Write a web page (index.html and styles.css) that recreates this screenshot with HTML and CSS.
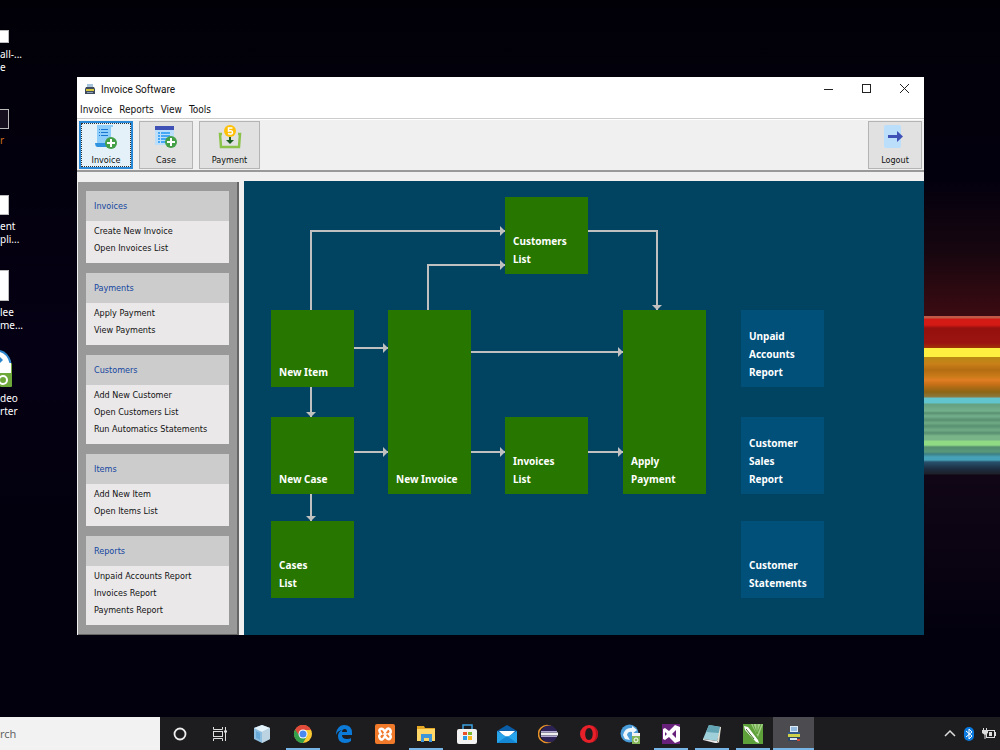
FILE: index.html
```html
<!DOCTYPE html>
<html lang="en">
<head>
  <meta charset="UTF-8">
  <meta name="viewport" content="width=device-width, initial-scale=1.0">
  <title>Invoice Software</title>
  <link rel="stylesheet" href="styles.css">
</head>
<body>
<div class="desktop">
  <ul class="shortcuts">
    <li>
      <div class="art"><span class="thumb thumb-s"></span></div>
      <span>all-...</span><span>e</span>
    </li>
    <li>
      <div class="art"><span class="thumb thumb-dark"></span></div>
      <span class="orange">r</span>
    </li>
    <li>
      <div class="art"><span class="thumb"></span></div>
      <span>ent</span><span>pli...</span>
    </li>
    <li>
      <div class="art"><span class="thumb thumb-l"></span></div>
      <span>lee</span><span>me...</span>
    </li>
    <li>
      <div class="art">
        <svg width="12" height="38" viewBox="0 0 12 38">
          <path d="M0 2Q9 4 11 14H0z" fill="#fff"/>
          <path d="M0 2Q8 4 10.500 14" fill="none" stroke="#2d86cc" stroke-width="2"/>
          <path d="M0 8l3 3-3 3z" fill="#2d86cc"/>
          <rect y="14" width="12" height="24" rx="1" fill="#6fa83a"/>
          <rect y="14" width="11" height="10" fill="#fff"/>
          <circle cx="3" cy="31" r="4" fill="none" stroke="#fff" stroke-width="2"/>
        </svg>
      </div>
      <span>deo</span><span>rter</span>
    </li>
  </ul>

  <div class="window">
    <header class="titlebar">
      <svg class="app-icon" width="12" height="12" viewBox="0 0 12 12">
        <rect x="3" y="1" width="6" height="4" fill="#a8c4da"/>
        <path d="M2 4h8l1 2v5H1V6z" fill="#3f4a5c"/>
        <rect x="2" y="6" width="8" height="2" fill="#d8c840"/>
        <rect x="3" y="9" width="6" height="1" fill="#8aa0b8"/>
      </svg>
      <h1>Invoice Software</h1>
      <div class="window-buttons">
        <button aria-label="Minimize"><svg width="10" height="10"><path d="M1 5.500h9" stroke="#222"/></svg></button>
        <button aria-label="Maximize"><svg width="10" height="10"><rect x="1.500" y="0.500" width="8" height="8" fill="none" stroke="#222"/></svg></button>
        <button aria-label="Close"><svg width="10" height="10"><path d="M1 0l9 9M10 0L1 9" stroke="#222"/></svg></button>
      </div>
    </header>

    <nav class="menubar">
      <a href="#">Invoice</a>
      <a href="#">Reports</a>
      <a href="#">View</a>
      <a href="#">Tools</a>
    </nav>

    <div class="toolbar">
      <button class="tool selected">
        <svg width="24" height="24" viewBox="0 0 24 24">
          <path d="M3 0h16v2h-2v16H3z" fill="#8fcdfa"/>
          <path d="M1 18h13v4H3q-2-1-2-4z" fill="#2f93e0"/>
          <path d="M5 4.500h1M7 4.500h7M5 7.500h1M7 7.500h7M5 10.500h1M7 10.500h7" stroke="#1976d2"/>
          <circle cx="17" cy="18" r="6" fill="#43a047"/>
          <path d="M17 14v8M13 18h8" stroke="#fff" stroke-width="2"/>
        </svg>
        Invoice
      </button>
      <button class="tool">
        <svg width="24" height="24" viewBox="0 0 24 24">
          <rect x="1" y="1" width="19" height="19" fill="#bbdefb"/>
          <rect x="1" y="1" width="19" height="4" fill="#3f51b5"/>
          <path d="M4 8h2M7 8h9M4 11h2M7 11h9M4 14h2M7 14h7M4 17h2M7 17h5" stroke="#2196f3" stroke-width="1.500"/>
          <circle cx="17" cy="17" r="6" fill="#43a047"/>
          <path d="M17 13v8M13 17h8" stroke="#fff" stroke-width="2"/>
        </svg>
        Case
      </button>
      <button class="tool tool-wide">
        <svg width="24" height="24" viewBox="0 0 24 24">
          <path d="M4 9H2l1 13h18L22 9h-2" fill="none" stroke="#8bc34a" stroke-width="2.500"/>
          <circle cx="12" cy="6" r="6" fill="#ffc107"/>
          <path d="M14.500 3h-4v3q4-1 4 1.500t-4.500 1" fill="none" stroke="#fff" stroke-width="1.500"/>
          <path d="M12 12v3" stroke="#1b5e20" stroke-width="2"/>
          <path d="M8 15h8l-4 4z" fill="#1b5e20"/>
        </svg>
        Payment
      </button>
      <button class="tool tool-end">
        <svg width="24" height="24" viewBox="0 0 24 24">
          <rect x="1" y="0" width="17" height="23" rx="2" fill="#bbdefb"/>
          <path d="M5 10h9V6l6 5.500-6 5.500v-4H5z" fill="#3f51b5"/>
        </svg>
        Logout
      </button>
    </div>

    <div class="content">
      <aside class="sidebar">
        <section class="panel">
          <h2>Invoices</h2>
          <ul>
            <li><a href="#">Create New Invoice</a></li>
            <li><a href="#">Open Invoices List</a></li>
          </ul>
        </section>
        <section class="panel">
          <h2>Payments</h2>
          <ul>
            <li><a href="#">Apply Payment</a></li>
            <li><a href="#">View Payments</a></li>
          </ul>
        </section>
        <section class="panel">
          <h2>Customers</h2>
          <ul>
            <li><a href="#">Add New Customer</a></li>
            <li><a href="#">Open Customers List</a></li>
            <li><a href="#">Run Automatics Statements</a></li>
          </ul>
        </section>
        <section class="panel">
          <h2>Items</h2>
          <ul>
            <li><a href="#">Add New Item</a></li>
            <li><a href="#">Open Items List</a></li>
          </ul>
        </section>
        <section class="panel">
          <h2>Reports</h2>
          <ul>
            <li><a href="#">Unpaid Accounts Report</a></li>
            <li><a href="#">Invoices Report</a></li>
            <li><a href="#">Payments Report</a></li>
          </ul>
        </section>
      </aside>

      <main class="diagram">
        <svg class="wires" width="680" height="454">
          <defs>
            <marker id="tip" markerWidth="5" markerHeight="10" refX="5" refY="5" orient="auto" markerUnits="userSpaceOnUse">
              <path d="M0 0l5 5-5 5z" fill="#c0c0c0"/>
            </marker>
          </defs>
          <path d="M67 129V50H261"/>
          <path d="M184 129V84H261"/>
          <path d="M344 50H413V129"/>
          <path d="M110 167H144"/>
          <path d="M227 171H379"/>
          <path d="M67 206V236"/>
          <path d="M110 271H144"/>
          <path d="M227 271H261"/>
          <path d="M344 271H379"/>
          <path d="M67 313V340"/>
        </svg>
        <a href="#" class="node customers">Customers<br>List</a>
        <a href="#" class="node new-item">New Item</a>
        <a href="#" class="node new-case">New Case</a>
        <a href="#" class="node cases">Cases<br>List</a>
        <a href="#" class="node tall new-invoice">New Invoice</a>
        <a href="#" class="node invoices">Invoices<br>List</a>
        <a href="#" class="node tall apply">Apply<br>Payment</a>
        <a href="#" class="node report unpaid">Unpaid<br>Accounts<br>Report</a>
        <a href="#" class="node report sales">Customer<br>Sales<br>Report</a>
        <a href="#" class="node report statements">Customer<br>Statements</a>
      </main>
    </div>
  </div>
</div>

<footer class="taskbar">
  <input class="search" type="text" placeholder="rch" aria-label="Search">
  <div class="apps">
    <button aria-label="Cortana">
      <svg width="20" height="20" viewBox="0 0 20 20"><circle cx="10" cy="10" r="5.500" fill="none" stroke="#eee" stroke-width="1.800"/></svg>
    </button>
    <button aria-label="Task View">
      <svg width="20" height="20" viewBox="0 0 20 20" fill="none" stroke="#ddd"><path d="M2.500 3v2.500h9V3M2.500 17v-2.500h9V17M14.500 3v14"/><rect x="2.500" y="7.500" width="9" height="5"/><path d="M13 7.500h3" stroke-width="2"/></svg>
    </button>
    <button aria-label="Virtual Box">
      <svg width="20" height="20" viewBox="0 0 20 20"><path d="M10 1l8 3v11l-8 4-8-4V4z" fill="#8fbfe0"/><path d="M10 1l8 3-8 4-8-4z" fill="#e4f2fa"/><path d="M10 8l8-4v11l-8 4z" fill="#bcd4e2"/><path d="M4 7l4 2v7l-4-2z" fill="#69a9d8"/></svg>
    </button>
    <button class="open" aria-label="Chrome">
      <svg width="20" height="20" viewBox="0 0 20 20"><circle cx="10" cy="10" r="9" fill="#fbc934"/><path d="M10 10L2.200 5.500A9 9 0 0 0 10 19l4-7z" fill="#34a04c"/><path d="M10 10H5L2.200 5.500A9 9 0 0 1 18 6h-8z" fill="#e04a3a"/><circle cx="10" cy="10" r="4.500" fill="#fff"/><circle cx="10" cy="10" r="3.500" fill="#4a8af0"/></svg>
    </button>
    <button aria-label="Edge">
      <svg width="20" height="20" viewBox="0 0 20 20"><path d="M2 9Q4 1 10 1q8 0 8 8v2H8q0 4 5 4 3 0 4-1v3q-2 2-6 2-7 0-7-7 0-4 4-6-5 1-6 5zM8 8h5q0-3-2-3-3 0-3 3z" fill="#0c7ad8"/></svg>
    </button>
    <button aria-label="XAMPP">
      <svg width="20" height="20" viewBox="0 0 20 20"><rect width="20" height="20" rx="2" fill="#f0792a"/><path d="M10 8Q8 4 5.500 5T6 10q-3 1.500-1 4.500T10 12q3 4.500 5 2.500T14 10q3-1.500 1-4.500T10 8z" fill="none" stroke="#fff" stroke-width="2.500"/><path d="M8 10h4" stroke="#fff" stroke-width="1.500"/></svg>
    </button>
    <button class="open" aria-label="File Explorer">
      <svg width="20" height="20" viewBox="0 0 20 20"><path d="M1 2h7l1 2h10v13H1z" fill="#e5a824"/><path d="M1 5h18v12H1z" fill="#ffd768"/><path d="M5 18v-8h11v8h-3v-4H8v4z" fill="#3d94d8"/></svg>
    </button>
    <button aria-label="Store">
      <svg width="20" height="20" viewBox="0 0 20 20"><path d="M6 6V1h9v5" fill="none" stroke="#3aa0e0" stroke-width="1.500"/><rect y="5" width="20" height="15" rx="2" fill="#f2f2f2"/><path d="M6 8h4v3H6z" fill="#e8512a"/><path d="M11 8h4v3h-4z" fill="#7cb82f"/><path d="M6 12h4v4H6z" fill="#2b9be8"/><path d="M11 12h4v4h-4z" fill="#fbb81c"/></svg>
    </button>
    <button aria-label="Mail">
      <svg width="20" height="20" viewBox="0 0 20 20"><path d="M0 7l10-6 10 6v4H0z" fill="#0a5ea8"/><path d="M2 7h16l-8 8z" fill="#fff"/><path d="M0 7l10 6 10-6v12H0z" fill="#28a4ea"/><path d="M0 19l10-7 10 7z" fill="#1488d4"/></svg>
    </button>
    <button aria-label="Eclipse">
      <svg width="20" height="20" viewBox="0 0 20 20"><circle cx="9" cy="10" r="8.500" fill="none" stroke="#e8922a" stroke-width="1.500"/><circle cx="11" cy="10" r="8.500" fill="#2c2255"/><path d="M3 7.500h16M3 12.500h16" stroke="#b0a8d0"/><path d="M3 10h17" stroke="#eee" stroke-width="3"/></svg>
    </button>
    <button aria-label="Opera">
      <svg width="20" height="20" viewBox="0 0 20 20"><path fill-rule="evenodd" d="M10 1a9 9 0 0 1 0 18 9 9 0 0 1 0-18zm0 3c-5 0-5 12 0 12s5-12 0-12z" fill="#e8202a"/><path d="M13 1.500A9 9 0 0 1 13 18.500q4-3 4-8.500t-4-8.500z" fill="#b81420"/></svg>
    </button>
    <button aria-label="Video Converter">
      <svg width="20" height="20" viewBox="0 0 20 20"><circle cx="9.500" cy="9.500" r="9" fill="#4a9cd8"/><path d="M3 11q2-8 9-7V2l5 4-5 4V8q-4-1-5 3l3 5-5-1z" fill="#eef6fb"/><path d="M12 9h8v4h-8z" fill="#f2f2f2"/><path d="M12 12h8v8h-8z" fill="#85b65a"/><circle cx="16" cy="16" r="2" fill="none" stroke="#fff"/></svg>
    </button>
    <button class="open" aria-label="Visual Studio">
      <svg width="20" height="20" viewBox="0 0 20 20"><rect x="1" y="0" width="18" height="20" fill="#68217a"/><path fill-rule="evenodd" d="M14 1l5 2v14l-5 2-6-6-4 3-2-1V5l2-1 4 3zM15 6l-4 4 4 4zM4 8v4l2-2z" fill="#fff"/></svg>
    </button>
    <button class="open" aria-label="Notepad">
      <svg width="20" height="20" viewBox="0 0 20 20"><path d="M7 1l12 2-4 14-14-2z" fill="#9fd0da"/><path d="M7 1l12 2-2 6-13-1z" fill="#62a4b4"/><path d="M1 15l14 2 1 2-3 0-12-3z" fill="#e8e8e8"/><path d="M18 3l1 0-2 16-2-2z" fill="#e4e0d0"/></svg>
    </button>
    <button class="open" aria-label="CorelDRAW">
      <svg width="20" height="20" viewBox="0 0 20 20"><rect width="20" height="20" fill="#5ea03a"/><path d="M8 0h12l-5 13z" fill="#a4d088"/><path d="M10 0l4 10M14 0v10M18 0l-4 10" stroke="#5ea03a" stroke-width="1"/><path d="M1 2l4 1 10 13 1 3-3-1L2 6z" fill="#fff"/><path d="M3 5l8 10" stroke="#386a20"/></svg>
    </button>
    <button class="open active" aria-label="Invoice Software">
      <svg width="20" height="20" viewBox="0 0 20 20"><path d="M6 2h8v6H6z" fill="#dceaf6"/><path d="M7 4h6M7 6h6" stroke="#4a88c8"/><path d="M4 8h12v3H4z" fill="#34588a"/><path d="M4 10h12v3H4z" fill="#cfd04a"/><path d="M4 13h12v4H4z" fill="#2e4664"/><path d="M6 14h7v2H6z" fill="#d8e4ee"/><path d="M13 15h3v2h-3z" fill="#d04a3a"/></svg>
    </button>
  </div>
  <div class="tray">
    <svg width="12" height="14" viewBox="0 0 12 14"><path d="M1 9l5-5 5 5" fill="none" stroke="#ddd" stroke-width="1.500"/></svg>
    <svg width="10" height="14" viewBox="0 0 10 14"><rect width="10" height="14" rx="5" fill="#0a7ae0"/><path d="M2 4l6 5-3 3V2l3 3-6 5" fill="none" stroke="#fff"/></svg>
    <svg width="14" height="14" viewBox="0 0 14 14" fill="none" stroke="#ddd"><rect x="4.500" y="3.500" width="8" height="7"/><path d="M13.500 5v4M1.500 1v3M4.500 1v3M3 7v5"/><path d="M0 3h6v3L3 8 0 6z" fill="#ddd" stroke="none"/><path d="M7 5h3v4H7z" fill="#ddd" stroke="none"/></svg>
  </div>
</footer>
</body>
</html>
```
FILE: styles.css
```css
* {
  box-sizing: border-box;
}
body {
  margin: 0;
  min-height: 100vh;
  display: flex;
  flex-direction: column;
  background: #02000b;
  font-family: "Noto Sans", sans-serif;
  font-size: 10px;
}
ul {
  list-style: none;
  margin: 0;
  padding: 0;
}
a {
  color: inherit;
  text-decoration: none;
}
button {
  font: inherit;
  color: inherit;
  border: none;
  background: none;
  padding: 0;
}

/* Desktop */
.desktop {
  position: relative;
  flex: 1;
  min-height: 640px;
  background:
    linear-gradient(
      transparent 180px, #16060f 250px, #3c0b12 316px,
      #c05a48 316px 318px, #d41a14 319px 325px, #94100e 328px, #9c1410 343px, #a03408 348px,
      #fdf040 348px 357px, #b88a14 357px, #c88018 364px, #b46c12 370px, #c87a18 376px,
      #e07e24 380px, #c87018 384px, #8c6414 392px, #8a7a40 397px,
      #62c4cc 398px 403px, #64a080 404px, #74b08c 411px, #588f70 413px, #74b08c 416px,
      #588f70 420px, #70ac86 423px, #588f70 426px, #70ac86 430px, #588f70 433px, #78b488 436px,
      #78b488 440px, #90dc84 441px 445px, #549070 447px, #58987a 452px, #3c7e84 454px,
      #46a2b8 457px 460px, #28506c 462px, #1c2c40 469px, #1c2028 474px, #100616 475px, #0a0312 560px, transparent 640px
    ) right top / 78px 100% no-repeat,
    linear-gradient(#010007, #050014 360px, #02000c 560px);
}
.shortcuts {
  width: 76px;
  color: #fff;
  line-height: 13px;
}
.shortcuts li {
  height: 86px;
}
.shortcuts span {
  display: block;
}
.art {
  height: 43px;
  margin-bottom: 5px;
  display: flex;
  align-items: flex-end;
}
.thumb {
  width: 9px;
  height: 20px;
  background: #fff;
  border: solid #bbb;
  border-width: 1px 1px 1px 0;
}
.thumb-s {
  height: 13px;
}
.thumb-l {
  height: 31px;
}
.thumb-dark {
  background: #16101e;
}
.orange {
  color: #d0701c;
}

/* Application window */
.window {
  position: absolute;
  top: 77px;
  left: 77px;
  right: 76px;
  background: #f0f0f0;
  color: #111;
}
.titlebar {
  height: 24px;
  padding: 0 1px 0 7px;
  display: flex;
  align-items: center;
  background: #fff;
}
.titlebar h1 {
  margin: 0 auto 0 5px;
  font-family: Roboto, sans-serif;
  font-size: 10px;
  font-weight: normal;
}
.window-buttons {
  display: flex;
}
.window-buttons button {
  width: 38px;
  height: 24px;
  display: grid;
  place-items: center;
}
.menubar {
  height: 18px;
  padding: 0 3px;
  display: flex;
  gap: 7px;
  font-family: "DejaVu Sans Condensed", "DejaVu Sans", sans-serif;
  line-height: 17px;
  background: #fff;
  border-bottom: 1px solid #ccc;
}
.toolbar {
  display: flex;
  gap: 6px;
  padding: 1px 2px 1px 2px;
  border-top: 1px solid #fff;
  border-bottom: 2px solid #999;
}
.tool {
  width: 54px;
  height: 48px;
  padding-top: 3px;
  display: flex;
  flex-direction: column;
  align-items: center;
  gap: 4px;
  background: #e1e1e1;
  border: 1px solid #b4b4b4;
  font-family: "DejaVu Sans Condensed", "DejaVu Sans", sans-serif;
  font-size: 9px;
  line-height: 14px;
}
.tool-wide {
  width: 61px;
}
.tool-end {
  margin-left: auto;
}
.selected {
  background: #e5f1f9;
  border: 2px solid #2b8ad8;
  padding-top: 2px;
  outline: 1px dotted #333;
  outline-offset: -3px;
}
.content {
  display: flex;
  gap: 5px;
  padding: 9px 0 0 1px;
}

/* Sidebar */
.sidebar {
  width: 161px;
  margin-top: 1px;
  padding: 9px 8px;
  display: flex;
  flex-direction: column;
  gap: 10px;
  background: #999;
  border: solid #666;
  border-width: 0 2px 1px 0;
  font-family: "DejaVu Sans Condensed", "DejaVu Sans", sans-serif;
  font-size: 9px;
}
.panel h2 {
  margin: 0;
  padding-left: 8px;
  font-size: 9px;
  font-weight: normal;
  line-height: 30px;
  color: #1446a0;
  background: #ccc;
}
.panel ul {
  padding: 2px 8px 6px;
  line-height: 17px;
  background: #eae8e9;
}

/* Flow diagram */
.diagram {
  flex: 1;
  position: relative;
  background: #004462;
}
.wires {
  position: absolute;
  top: 0;
  left: 0;
}
.wires > path {
  fill: none;
  stroke: #c0c0c0;
  stroke-width: 2;
  marker-end: url(#tip);
}
.node {
  position: absolute;
  width: 83px;
  height: 77px;
  padding: 0 0 6px 8px;
  display: flex;
  align-items: flex-end;
  background: #267600;
  color: #fff;
  font-size: 10px;
  font-weight: bold;
  line-height: 18px;
}
.tall {
  height: 184px;
}
.report {
  background: #00507a;
}
.customers { left: 261px; top: 16px; }
.new-item { left: 27px; top: 129px; }
.new-case { left: 27px; top: 236px; }
.cases { left: 27px; top: 340px; }
.new-invoice { left: 144px; top: 129px; }
.invoices { left: 261px; top: 236px; }
.apply { left: 379px; top: 129px; }
.unpaid { left: 497px; top: 129px; }
.sales { left: 497px; top: 236px; }
.statements { left: 497px; top: 340px; }

/* Taskbar */
.taskbar {
  height: 33px;
  display: flex;
  background: #1d1d20;
}
.search {
  width: 160px;
  padding: 0;
  border: none;
  background: #f2f2f2;
  font-family: "Noto Sans", sans-serif;
  font-size: 11px;
}
.search::placeholder {
  color: #666;
}
.apps {
  width: 654px;
  display: grid;
  grid-template-columns: repeat(16, 1fr);
}
.apps button {
  display: grid;
  place-items: center;
}
.apps .open {
  background: linear-gradient(#76b5e6, #76b5e6) center bottom / 34px 2px no-repeat;
}
.apps .active {
  background-color: #4c4c50;
  background-size: 100% 2px;
}
.tray {
  margin-left: auto;
  padding-right: 4px;
  display: flex;
  align-items: center;
  gap: 8px;
}
```
